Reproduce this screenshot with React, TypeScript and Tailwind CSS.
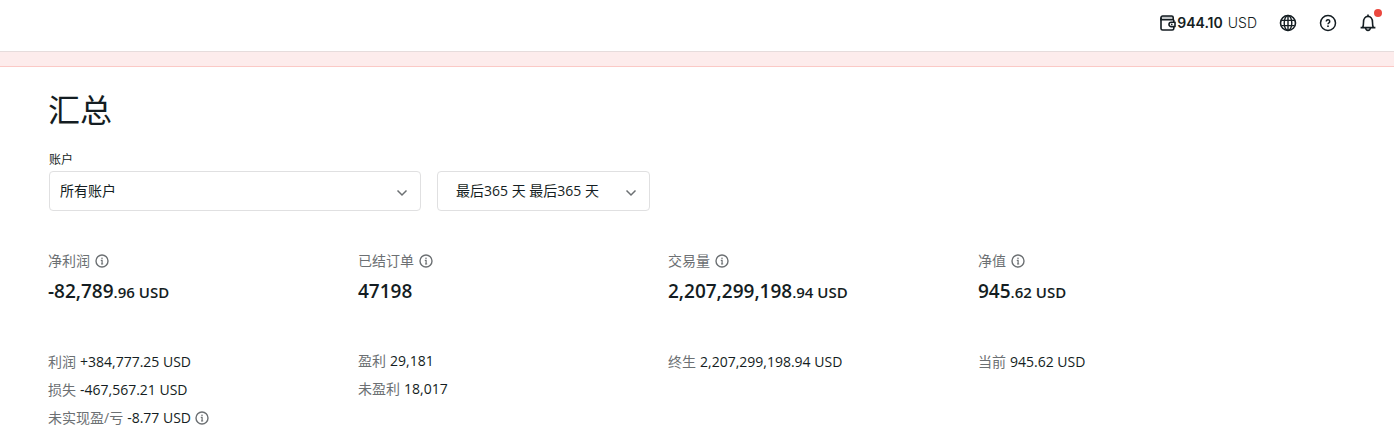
import type { ReactNode } from 'react'

type DetailRow = {
  label: string
  value: string
  info?: boolean
}

type SummaryMetric = {
  label: string
  whole: string
  fraction?: string
  rows: DetailRow[]
}

const metrics: SummaryMetric[] = [
  {
    label: '净利润',
    whole: '-82,789',
    fraction: '.96 USD',
    rows: [
      { label: '利润', value: '+384,777.25 USD' },
      { label: '损失', value: '-467,567.21 USD' },
      { label: '未实现盈/亏', value: '-8.77 USD', info: true },
    ],
  },
  {
    label: '已结订单',
    whole: '47198',
    rows: [
      { label: '盈利', value: '29,181' },
      { label: '未盈利', value: '18,017' },
    ],
  },
  {
    label: '交易量',
    whole: '2,207,299,198',
    fraction: '.94 USD',
    rows: [{ label: '终生', value: '2,207,299,198.94 USD' }],
  },
  {
    label: '净值',
    whole: '945',
    fraction: '.62 USD',
    rows: [{ label: '当前', value: '945.62 USD' }],
  },
]

function InfoButton({ label }: { label: string }) {
  return (
    <button type="button" aria-label={label} className="text-[#6c7073]">
      <svg viewBox="0 0 14 14" className="size-3.5" fill="none" stroke="currentColor" strokeWidth="1.4">
        <circle cx="7" cy="7" r="6" />
        <path d="M5.8 6.4H7.1V10M6 10h2.2" strokeWidth="1.2" />
        <circle cx="7" cy="4.3" r="0.8" fill="currentColor" stroke="none" />
      </svg>
    </button>
  )
}

function Chevron() {
  return (
    <svg
      viewBox="0 0 12 12"
      className="pointer-events-none absolute top-4 right-[13px] size-3 text-[#6c7073]"
      fill="none"
      stroke="currentColor"
      strokeWidth="1.5"
    >
      <path d="M1.5 3.5 6 8l4.5-4.5" />
    </svg>
  )
}

function WalletIcon() {
  return (
    <svg viewBox="0 0 18 18" className="size-[18px]" fill="none" stroke="currentColor" strokeWidth="1.6">
      <path d="M3.6 2h9a1.6 1.6 0 0 1 1.6 1.6v2.2H2V3.6A1.6 1.6 0 0 1 3.6 2z" fill="#c3c6c8" />
      <path d="M2 3.7v10.7A1.6 1.6 0 0 0 3.6 16h9.6a1.6 1.6 0 0 0 1.6-1.6V5.8" />
      <path d="M16 8.2h-3.8a2.2 2.2 0 0 0 0 4.4H16z" fill="white" strokeLinejoin="round" />
      <circle cx="12.8" cy="10.4" r="0.8" fill="currentColor" stroke="none" />
    </svg>
  )
}

function GlobeIcon() {
  return (
    <svg viewBox="0 0 18 18" className="size-[18px]" fill="none" stroke="currentColor" strokeWidth="1.6">
      <circle cx="9" cy="9" r="7.5" />
      <ellipse cx="9" cy="9" rx="3.8" ry="7.5" strokeWidth="1.4" />
      <path d="M9 1.5v15M2.4 6.4h13.2M2.4 11.6h13.2" strokeWidth="1.4" />
    </svg>
  )
}

function HelpIcon() {
  return (
    <svg viewBox="0 0 18 18" className="size-[18px]" fill="none" stroke="currentColor" strokeWidth="1.5">
      <circle cx="9" cy="9" r="7.5" />
      <path d="M7.3 7.5a1.7 1.7 0 1 1 2.6 1.4c-.6.4-.9.7-.9 1.3" />
      <circle cx="9" cy="12.2" r="0.9" fill="currentColor" stroke="none" />
    </svg>
  )
}

function BellIcon() {
  return (
    <svg viewBox="0 0 18 18" className="size-[18px]" fill="none" stroke="currentColor" strokeWidth="1.6">
      <path d="M1.6 13.6h14.8M3.6 13.6C4.5 12.2 4.5 10.6 4.5 8.2 4.5 5 6.4 2.4 9 2.4s4.5 2.6 4.5 5.8c0 2.4 0 4 .9 5.4" />
      <path d="M9 .6v1.8M6.6 14c.2 1.6 1.1 2.4 2.4 2.4s2.2-.8 2.4-2.4" />
    </svg>
  )
}

function HeaderButton({ label, children }: { label: string; children: ReactNode }) {
  return (
    <button type="button" aria-label={label} className="relative">
      {children}
    </button>
  )
}

function MetricColumn({ metric }: { metric: SummaryMetric }) {
  return (
    <section>
      <div className="flex h-5 items-center gap-[5px]">
        <h2 className="text-sm text-[#6c7073]">{metric.label}</h2>
        <InfoButton label={metric.label} />
      </div>
      <p className="mt-1 text-[19px] leading-8 font-semibold">
        {metric.whole}
        {metric.fraction && <span className="text-[15px]">{metric.fraction}</span>}
      </p>
      <ul className="mt-10 text-sm leading-7">
        {metric.rows.map((row) => (
          <li key={row.label} className="flex items-center gap-1">
            <span className="text-[#6c7073]">{row.label}</span>
            <span>{row.value}</span>
            {row.info && <InfoButton label={row.label} />}
          </li>
        ))}
      </ul>
    </section>
  )
}

export default function App() {
  return (
    <div className="bg-white font-['Open_Sans','Noto_Sans_CJK_SC',sans-serif] text-[#141d22]">
      <header className="flex h-[51px] items-center justify-end gap-[22px] pr-[17px] pb-[5px]">
        <button type="button" className="flex items-center font-['Inter',sans-serif] text-sm">
          <WalletIcon />
          <span className="font-semibold">944.10</span>
          <span className="ml-[5px] font-light">USD</span>
        </button>
        <HeaderButton label="语言">
          <GlobeIcon />
        </HeaderButton>
        <HeaderButton label="帮助">
          <HelpIcon />
        </HeaderButton>
        <HeaderButton label="通知">
          <BellIcon />
          <span className="absolute -top-[5px] -right-[5px] size-2 rounded-full bg-[#eb483f]" />
        </HeaderButton>
      </header>
      <div className="h-4 border-t border-b border-t-[#e6dcdc] border-b-[#fbc9c6] bg-[#fdecec]" />

      <main className="px-12 pt-5">
        <h1 className="text-[32px] leading-[46px]">汇总</h1>
        <div className="mt-4 flex items-end gap-4 pl-px">
          <div className="w-[372px]">
            <label htmlFor="account" className="block text-xs leading-[22px]">
              账户
            </label>
            <div className="relative">
              <select id="account" className="h-10 w-full appearance-none rounded border border-[#e0e0e1] px-2.5 text-sm">
                <option>所有账户</option>
              </select>
              <Chevron />
            </div>
          </div>
          <div className="relative w-[213px]">
            <select
              aria-label="时间范围"
              className="block h-10 w-full appearance-none rounded border border-[#e0e0e1] pr-8 pl-[18px] text-sm"
            >
              <option>最后365 天 最后365 天</option>
            </select>
            <Chevron />
          </div>
        </div>

        <div className="mt-10 grid max-w-[1240px] grid-cols-4">
          {metrics.map((metric) => (
            <MetricColumn key={metric.label} metric={metric} />
          ))}
        </div>
      </main>
    </div>
  )
}
